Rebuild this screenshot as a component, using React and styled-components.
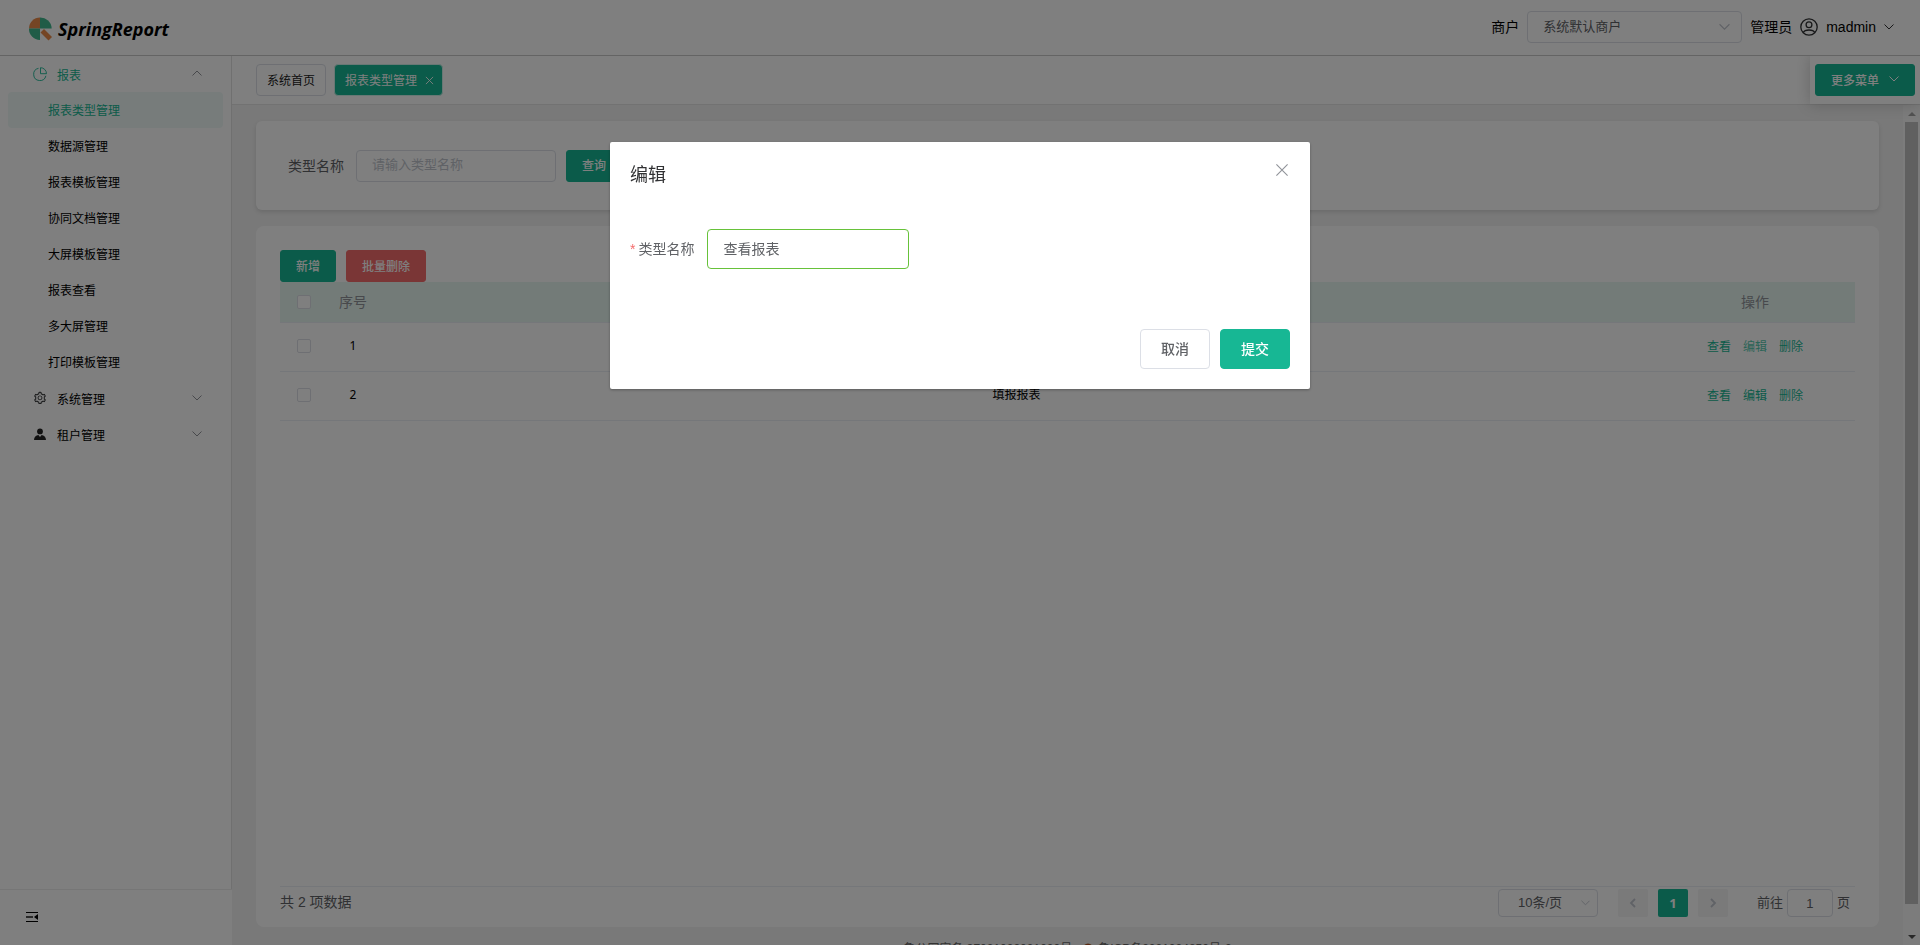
import React, { useState } from 'react';
import styled, { createGlobalStyle, css } from 'styled-components';
import { AiOutlineSetting } from 'react-icons/ai';

const primary = '#17b794';

const GlobalStyle = createGlobalStyle`
  * {
    box-sizing: border-box;
  }

  body {
    margin: 0;
    overflow: hidden;
    background: #fff;
    color: #000;
    font-family: "Liberation Sans", "Noto Sans CJK SC", sans-serif;
    font-size: 14px;
    line-height: 20px;
  }

  button, input, select {
    margin: 0;
    font-family: inherit;
  }

  a {
    text-decoration: none;
  }
`;

const Layout = styled.div`
  height: 100vh;
  display: flex;
  flex-direction: column;
`;

/* header */

const Header = styled.header`
  height: 56px;
  flex-shrink: 0;
  display: flex;
  align-items: center;
  justify-content: space-between;
  padding: 0 26px 0 28px;
  border-bottom: 1px solid #c8c8c8;
`;

const Brand = styled.a`
  display: flex;
  align-items: center;
  gap: 5px;
  padding-top: 2px;
  color: #000;
  font-family: "Open Sans", sans-serif;
  font-size: 18px;
  font-weight: 700;
  font-style: italic;
`;

const HeaderRight = styled.div`
  display: flex;
  align-items: center;
  gap: 8px;
  padding-bottom: 1px;
`;

const SelectWrap = styled.div`
  position: relative;
  width: ${props => props.$width};

  svg {
    position: absolute;
    right: ${props => props.$iconRight};
    top: 50%;
    transform: translateY(-50%);
    pointer-events: none;
  }
`;

const Select = styled.select`
  appearance: none;
  display: block;
  width: 100%;
  height: ${props => props.$height};
  padding: ${props => props.$padding};
  border: 1px solid #dcdfe6;
  border-radius: 4px;
  background: transparent;
  color: #606266;
  font-size: 13px;
`;

const UserButton = styled.button`
  display: flex;
  align-items: center;
  gap: 8px;
  padding: 0;
  border: 0;
  background: none;
  color: #000;
  font-size: 14px;
`;

/* sidebar */

const Body = styled.div`
  flex: 1;
  min-height: 0;
  display: flex;
`;

const Sidebar = styled.aside`
  width: 232px;
  flex-shrink: 0;
  display: flex;
  flex-direction: column;
`;

const Menu = styled.nav`
  flex: 1;
  border-right: 1px solid #e0e0e0;
`;

const MenuGroup = styled.button`
  display: flex;
  align-items: center;
  gap: 10px;
  width: 100%;
  height: 36px;
  padding: 0 29px 0 33px;
  border: 0;
  background: none;
  color: ${props => (props.$active ? primary : '#000')};
  font-size: 12px;
  text-align: left;

  span {
    flex: 1;
  }
`;

const MenuItem = styled.a`
  display: block;
  height: 36px;
  margin: 0 8px;
  padding-left: 40px;
  border-radius: 4px;
  background: ${props => (props.$active ? '#eef9f6' : 'transparent')};
  color: ${props => (props.$active ? primary : '#000')};
  font-size: 12px;
  line-height: 38px;
`;

const SidebarFooter = styled.div`
  height: 56px;
  display: flex;
  align-items: center;
  padding: 0 0 2px 26px;
  border-top: 1px solid #ececec;
`;

const IconButton = styled.button`
  display: flex;
  padding: 0;
  border: 0;
  background: none;
  color: #000;
`;

/* main area */

const Main = styled.main`
  flex: 1;
  min-width: 0;
  display: flex;
  flex-direction: column;
`;

const TabBar = styled.div`
  height: 49px;
  flex-shrink: 0;
  display: flex;
  align-items: center;
  gap: 8px;
  padding-left: 24px;
  border-bottom: 1px solid #e4e4e4;
`;

const Tab = styled.div`
  display: flex;
  align-items: center;
  gap: 8px;
  height: 32px;
  padding: 1px ${props => (props.$active ? '8px' : '10px')} 0 10px;
  border: 1px solid ${props => (props.$active ? '#d1f1ea' : '#dcdfe6')};
  border-radius: 4px;
  background: ${props => (props.$active ? primary : '#fff')};

  a {
    color: ${props => (props.$active ? '#fff' : '#222')};
    font-size: 12px;
  }
`;

const MoreMenu = styled.div`
  position: relative;
  align-self: stretch;
  display: flex;
  align-items: center;
  margin-left: auto;
  padding: 0 5px;
  background: #fff;
  box-shadow: 0 0 16px rgba(0, 0, 0, 0.2);
  clip-path: inset(0 0 -16px -24px);
`;

const Button = styled.button`
  display: inline-flex;
  align-items: center;
  justify-content: center;
  gap: 10px;
  height: 32px;
  padding: 0 15px 2px;
  border: 1px solid ${primary};
  border-radius: 3px;
  background: ${primary};
  color: #fff;
  font-size: 12px;
  font-weight: 500;
  white-space: nowrap;

  ${props => props.$danger && css`
    border-color: #f56c6c;
    background: #f56c6c;
  `}

  ${props => props.$large && css`
    height: 40px;
    padding: 0 20px 2px;
    border-radius: 4px;
    font-size: 14px;
  `}

  ${props => props.$plain && css`
    border-color: #dcdfe6;
    background: #fff;
    color: #606266;
  `}
`;

const ContentRow = styled.div`
  flex: 1;
  min-height: 0;
  display: flex;
  background: #f2f2f2;
`;

const Content = styled.div`
  flex: 1;
  min-width: 0;
  overflow: hidden;
  padding: 16px 24px 0;
`;

const SearchCard = styled.form`
  display: flex;
  align-items: center;
  gap: 10px;
  height: 89px;
  padding: 0 32px;
  margin-bottom: 16px;
  border-radius: 6px;
  background: #fff;
  box-shadow: 0 2px 4px rgba(0, 0, 0, 0.12);
`;

const FieldLabel = styled.label`
  padding-right: 2px;
  color: #606266;
  font-size: 14px;

  ${props => props.$required && css`
    &::before {
      content: '*';
      margin-right: 3px;
      color: #f56c6c;
    }
  `}
`;

const Input = styled.input`
  width: 200px;
  height: 32px;
  padding: 0 15px 2px;
  border: 1px solid #dcdfe6;
  border-radius: 4px;
  background: transparent;
  color: #606266;
  font-size: 13px;
  outline: none;

  &::placeholder {
    color: #c0c4cc;
  }

  ${props => props.$valid && css`
    width: 202px;
    height: 40px;
    border-color: #67c23a;
    font-size: 14px;
  `}
`;

const TableCard = styled.section`
  display: flex;
  flex-direction: column;
  height: calc(100vh - 244px);
  padding: 24px 24px 10px;
  border-radius: 8px;
  background: #fff;
`;

const Toolbar = styled.div`
  display: flex;
  gap: 10px;
`;

const Table = styled.table`
  width: 100%;
  table-layout: fixed;
  border-collapse: separate;
  border-spacing: 0;
  text-align: center;

  th, td {
    padding: 0;
    border-bottom: 1px solid #ebeef5;
  }

  th {
    height: 41px;
    background: #e6f6f1;
    color: #909399;
    font-size: 14px;
    font-weight: 400;
  }

  td {
    height: 49px;
    padding-bottom: 2px;
    font-family: "Noto Sans", "Noto Sans CJK SC", sans-serif;
    font-size: 12px;
  }
`;

const Column = styled.col`
  width: ${props => props.$width};
`;

const Checkbox = styled.input`
  appearance: none;
  display: block;
  width: 14px;
  height: 14px;
  margin: 0 auto;
  border: 1px solid #dcdfe6;
  border-radius: 2px;
  background: #fff;
`;

const Actions = styled.div`
  display: flex;
  justify-content: center;
  gap: 12px;
  padding-top: 2px;
`;

const ActionLink = styled.a`
  color: ${primary};
  opacity: ${props => (props.$faded ? 0.75 : 1)};
`;

const PaginationBar = styled.div`
  display: flex;
  align-items: center;
  justify-content: space-between;
  margin-top: auto;
  padding-top: 2px;
  border-top: 1px solid #ebeef5;
  color: #606266;
`;

const Total = styled.span`
  padding-bottom: 2px;
`;

const Pager = styled.div`
  display: flex;
  align-items: center;
  gap: 10px;
  padding-right: 5px;
`;

const PageButton = styled.button`
  display: flex;
  align-items: center;
  justify-content: center;
  width: 30px;
  height: 28px;
  padding: 0 0 1px;
  border: 0;
  border-radius: 2px;
  background: ${props => (props.$active ? primary : '#f4f4f5')};
  color: ${props => (props.$active ? '#fff' : '#c0c4cc')};
  font-family: "Noto Sans", sans-serif;
  font-size: 13px;
  font-weight: 700;
`;

const PageButtons = styled.div`
  display: flex;
  gap: 10px;
  padding: 0 19px 0 10px;
`;

const Jumper = styled.label`
  display: flex;
  align-items: center;
  gap: 4px;
  font-size: 13px;
`;

const JumperInput = styled(Input)`
  width: 46px;
  height: 28px;
  padding: 0;
  text-align: center;
`;

const PageFooter = styled.footer`
  display: flex;
  justify-content: center;
  gap: 10px;
  padding-top: 12px;
  font-size: 12px;

  a {
    display: flex;
    align-items: center;
    gap: 4px;
    color: #666;
    white-space: nowrap;
  }
`;

const Scrollbar = styled.div`
  width: 17px;
  flex-shrink: 0;
  display: flex;
  flex-direction: column;
  align-items: center;
  background: #f8f8f8;
`;

const ScrollArrow = styled.span`
  display: flex;
  align-items: center;
  justify-content: center;
  height: 17px;
  color: ${props => props.$color};
`;

const ScrollThumb = styled.div`
  flex: 1;
  width: 13px;
  margin-bottom: 24px;
  background: #c1c1c1;
`;

/* dialog */

const Mask = styled.div`
  position: fixed;
  inset: 0;
  display: flex;
  align-items: flex-start;
  justify-content: center;
  padding-top: 15vh;
  background: rgba(0, 0, 0, 0.5);
`;

const Dialog = styled.div`
  width: 700px;
  border-radius: 2px;
  background: #fff;
  box-shadow: 0 1px 3px rgba(0, 0, 0, 0.3);
`;

const DialogHeader = styled.div`
  display: flex;
  align-items: flex-start;
  justify-content: space-between;
  padding: 21px 21px 10px 20px;

  h2 {
    margin: 0;
    color: #303133;
    font-size: 18px;
    font-weight: 400;
    line-height: 24px;
  }
`;

const DialogBody = styled.div`
  padding: 32px 20px 28px;
`;

const FormItem = styled.div`
  display: flex;
  align-items: center;
  gap: 11px;
  margin-bottom: 22px;
`;

const DialogFooter = styled.div`
  display: flex;
  justify-content: flex-end;
  gap: 10px;
  padding: 10px 20px 20px;
`;

const Chevron = ({ up, size = 10, color = '#909399' }) => (
  <svg width={size} height={size} viewBox="0 0 10 10" fill="none" stroke={color}>
    <path d={up ? 'M0.5 6.5L5 2L9.5 6.5' : 'M0.5 2.5L5 7L9.5 2.5'} />
  </svg>
);

const PageArrow = ({ next }) => (
  <svg width="10" height="10" viewBox="0 0 10 10" fill="none" stroke="currentColor" strokeWidth="1.8">
    <path d={next ? 'M3 1L7 5L3 9' : 'M7 1L3 5L7 9'} />
  </svg>
);

const Cross = ({ size, color, width = 1 }) => (
  <svg width={size} height={size} viewBox="0 0 10 10" fill="none" stroke={color} strokeWidth={width}>
    <path d="M1 1L9 9M9 1L1 9" />
  </svg>
);

const Logo = () => (
  <svg width="25" height="24" viewBox="0 0 25 24">
    <path d="M12 11.5V0.5A11 11 0 0 0 1 11.5Z" fill="#ea8a48" />
    <path d="M12 11.5V0.5A11.5 11.5 0 0 1 23.7 11.5Z" fill="#40b88e" />
    <path d="M12 11.5V23A11 11 0 0 1 1 11.5Z" fill="#40b88e" />
    <path d="M12.5 15.5L16 12L24 20L20.5 23.5Z" fill="#ea8a48" />
  </svg>
);

const PieIcon = () => (
  <svg width="14" height="14" viewBox="0 0 14 14" fill="none" stroke="currentColor" strokeWidth="0.9">
    <path d="M5.5 1.3A6.2 6.2 0 1 0 12.9 8.8" />
    <path d="M7.5 0.7V6.7H13.5A6 6 0 0 0 7.5 0.7Z" />
  </svg>
);

const TenantIcon = () => (
  <svg width="14" height="14" viewBox="0 0 14 14" fill="#222">
    <circle cx="7" cy="4.4" r="2.9" />
    <path d="M1 13C1 10 3 8.4 5.4 8L7 10L8.6 8C11 8.4 13 10 13 13Z" />
  </svg>
);

const AvatarIcon = () => (
  <svg width="18" height="18" viewBox="0 0 18 18" fill="none" stroke="#303133" strokeWidth="1.3">
    <circle cx="9" cy="9" r="8.2" />
    <circle cx="9" cy="6.8" r="2.9" />
    <path d="M3.2 14.6C4.2 12.6 6 12 9 12S13.8 12.6 14.8 14.6" />
  </svg>
);

const CollapseIcon = () => (
  <svg width="12" height="12" viewBox="0 0 12 12">
    <path d="M0 1H12V2H0ZM0 10H12V11H0Z" fill="#000" />
    <path d="M0 5H7V7H0Z" fill="#555" />
    <path d="M12 3V9L8 6Z" fill="#000" />
  </svg>
);

const BadgeIcon = () => (
  <svg width="12" height="12" viewBox="0 0 12 12">
    <circle cx="6" cy="6" r="5.5" fill="#a8642c" />
    <circle cx="6" cy="5" r="3.5" fill="#c8281c" />
  </svg>
);

const menuItems = [
  '报表类型管理',
  '数据源管理',
  '报表模板管理',
  '协同文档管理',
  '大屏模板管理',
  '报表查看',
  '多大屏管理',
  '打印模板管理'
];

const rows = [
  { id: 1, name: '查看报表' },
  { id: 2, name: '填报报表' }
];

const App = () => {
  const [typeName, setTypeName] = useState('查看报表');

  return (
    <>
      <GlobalStyle />
      <Layout>
        <Header>
          <Brand href="#">
            <Logo />
            SpringReport
          </Brand>
          <HeaderRight>
            <label htmlFor="merchant">商户</label>
            <SelectWrap $width="215px" $iconRight="12px">
              <Select id="merchant" $height="32px" $padding="0 30px 2px 15px">
                <option>系统默认商户</option>
              </Select>
              <Chevron size={11} color="#c0c4cc" />
            </SelectWrap>
            <span>管理员</span>
            <UserButton type="button">
              <AvatarIcon />
              madmin
              <Chevron color="#303133" />
            </UserButton>
          </HeaderRight>
        </Header>
        <Body>
          <Sidebar>
            <Menu>
              <MenuGroup type="button" $active>
                <PieIcon />
                <span>报表</span>
                <Chevron up />
              </MenuGroup>
              {menuItems.map((item, index) => (
                <MenuItem key={item} href="#" $active={index === 0}>
                  {item}
                </MenuItem>
              ))}
              <MenuGroup type="button">
                <AiOutlineSetting size={14} color="#303133" />
                <span>系统管理</span>
                <Chevron />
              </MenuGroup>
              <MenuGroup type="button">
                <TenantIcon />
                <span>租户管理</span>
                <Chevron />
              </MenuGroup>
            </Menu>
            <SidebarFooter>
              <IconButton type="button" aria-label="收起菜单">
                <CollapseIcon />
              </IconButton>
            </SidebarFooter>
          </Sidebar>
          <Main>
            <TabBar>
              <Tab>
                <a href="#">系统首页</a>
              </Tab>
              <Tab $active>
                <a href="#">报表类型管理</a>
                <IconButton type="button" aria-label="关闭标签">
                  <Cross size={9} color="#fff" />
                </IconButton>
              </Tab>
              <MoreMenu>
                <Button type="button">
                  更多菜单
                  <Chevron color="#fff" />
                </Button>
              </MoreMenu>
            </TabBar>
            <ContentRow>
              <Content>
                <SearchCard onSubmit={e => e.preventDefault()}>
                  <FieldLabel htmlFor="search-name">类型名称</FieldLabel>
                  <Input id="search-name" placeholder="请输入类型名称" />
                  <Button type="submit">查询</Button>
                </SearchCard>
                <TableCard>
                  <Toolbar>
                    <Button type="button">新增</Button>
                    <Button type="button" $danger>批量删除</Button>
                  </Toolbar>
                  <Table>
                    <colgroup>
                      <Column $width="48px" />
                      <Column $width="50px" />
                      <Column />
                      <Column $width="200px" />
                    </colgroup>
                    <thead>
                      <tr>
                        <th><Checkbox type="checkbox" aria-label="全选" /></th>
                        <th>序号</th>
                        <th>类型名称</th>
                        <th>操作</th>
                      </tr>
                    </thead>
                    <tbody>
                      {rows.map(row => (
                        <tr key={row.id}>
                          <td><Checkbox type="checkbox" aria-label={row.name} /></td>
                          <td>{row.id}</td>
                          <td>{row.name}</td>
                          <td>
                            <Actions>
                              <ActionLink href="#">查看</ActionLink>
                              <ActionLink href="#" $faded={row.id === 1}>编辑</ActionLink>
                              <ActionLink href="#">删除</ActionLink>
                            </Actions>
                          </td>
                        </tr>
                      ))}
                    </tbody>
                  </Table>
                  <PaginationBar>
                    <Total>共 2 项数据</Total>
                    <Pager>
                      <SelectWrap $width="100px" $iconRight="8px">
                        <Select aria-label="每页条数" $height="28px" $padding="0 20px 2px 19px">
                          <option>10条/页</option>
                        </Select>
                        <Chevron size={9} color="#c0c4cc" />
                      </SelectWrap>
                      <PageButtons>
                        <PageButton type="button" aria-label="上一页"><PageArrow /></PageButton>
                        <PageButton type="button" $active>1</PageButton>
                        <PageButton type="button" aria-label="下一页"><PageArrow next /></PageButton>
                      </PageButtons>
                      <Jumper>
                        前往
                        <JumperInput defaultValue="1" />
                        页
                      </Jumper>
                    </Pager>
                  </PaginationBar>
                </TableCard>
                <PageFooter>
                  <a href="#">鲁公网安备 37021002001000号</a>
                  <a href="#">
                    <BadgeIcon />
                    鲁ICP备2021024852号-2
                  </a>
                </PageFooter>
              </Content>
              <Scrollbar>
                <ScrollArrow $color="#a3a3a3">
                  <svg width="8" height="4" viewBox="0 0 8 4"><path d="M0 4L4 0L8 4Z" fill="currentColor" /></svg>
                </ScrollArrow>
                <ScrollThumb />
                <ScrollArrow $color="#505050">
                  <svg width="8" height="4" viewBox="0 0 8 4"><path d="M0 0L4 4L8 0Z" fill="currentColor" /></svg>
                </ScrollArrow>
              </Scrollbar>
            </ContentRow>
          </Main>
        </Body>
      </Layout>
      <Mask>
        <Dialog role="dialog" aria-label="编辑">
          <DialogHeader>
            <h2>编辑</h2>
            <IconButton type="button" aria-label="关闭">
              <Cross size={14} color="#909399" width={0.8} />
            </IconButton>
          </DialogHeader>
          <DialogBody>
            <FormItem>
              <FieldLabel htmlFor="type-name" $required>类型名称</FieldLabel>
              <Input
                id="type-name"
                $valid
                value={typeName}
                onChange={e => setTypeName(e.target.value)}
              />
            </FormItem>
          </DialogBody>
          <DialogFooter>
            <Button type="button" $large $plain>取消</Button>
            <Button type="button" $large>提交</Button>
          </DialogFooter>
        </Dialog>
      </Mask>
    </>
  );
};

export default App;
